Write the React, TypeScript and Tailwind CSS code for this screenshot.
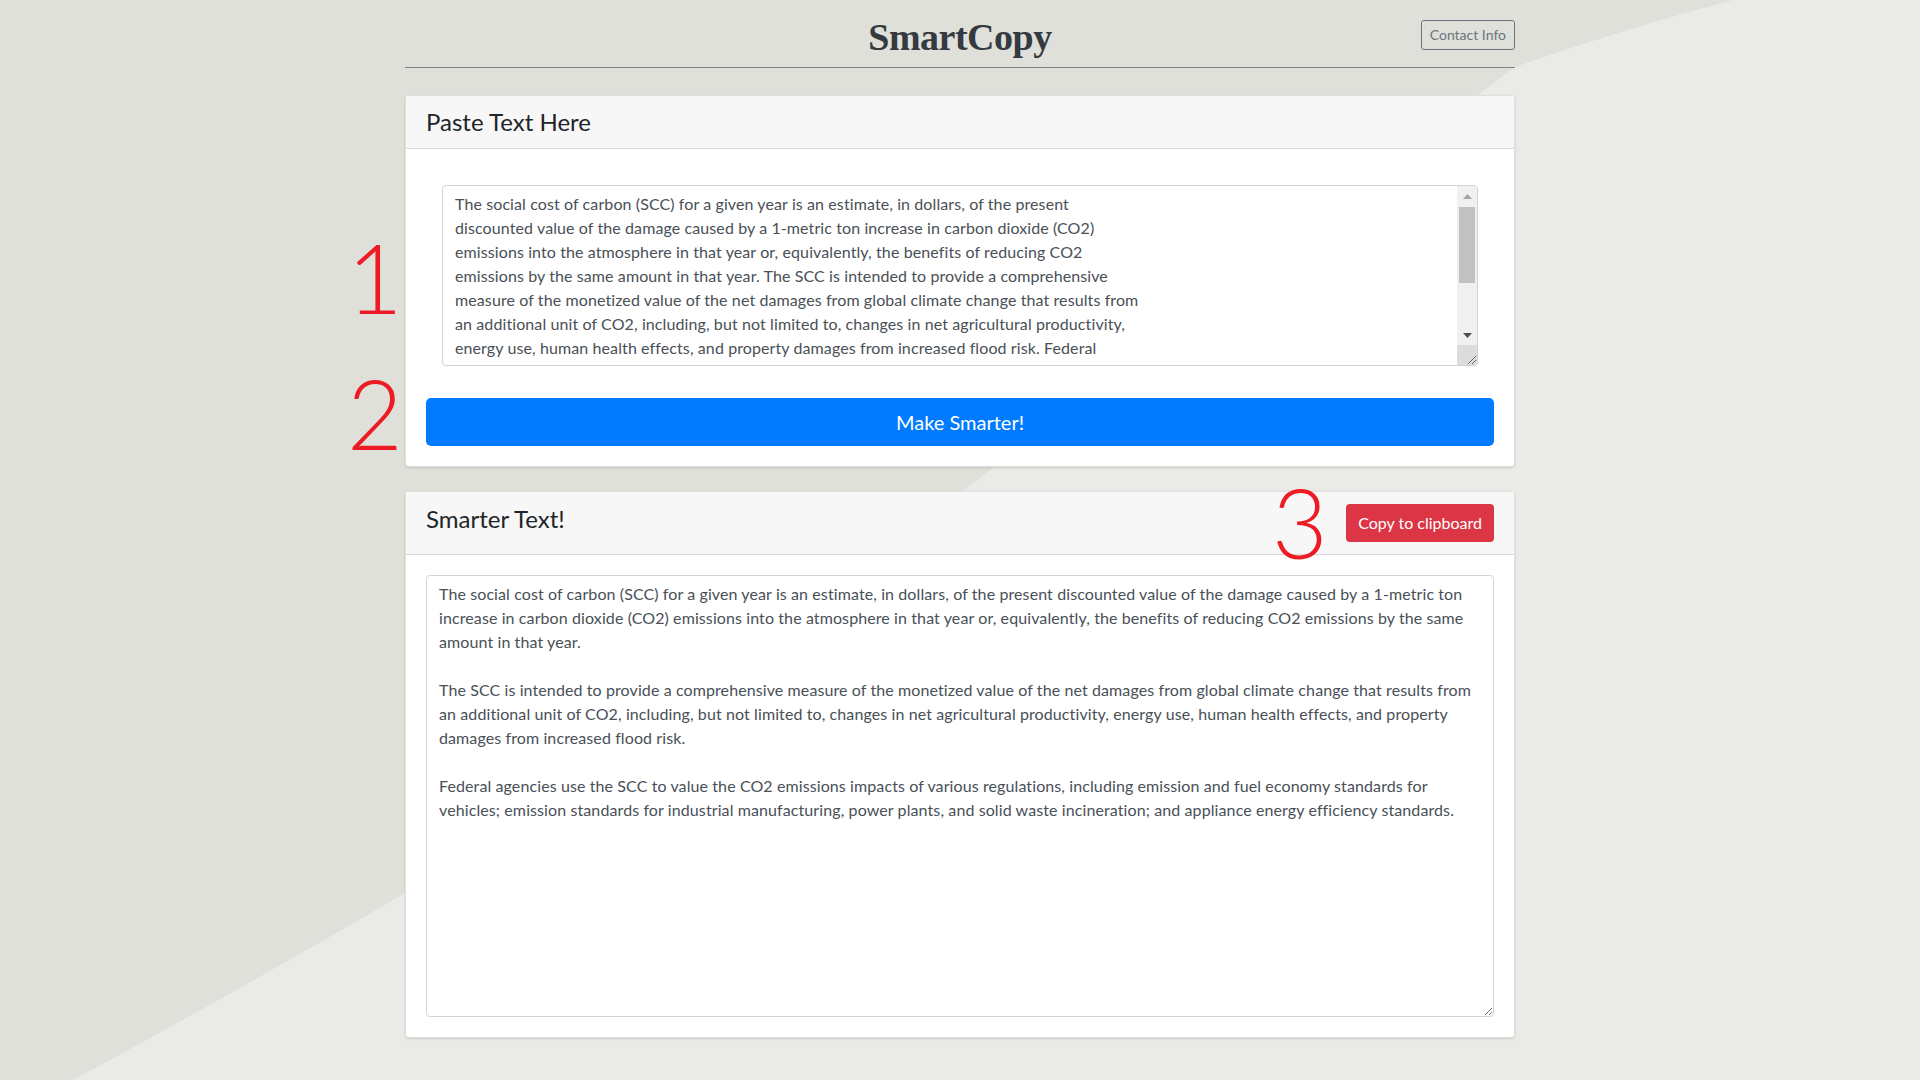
import React, { useState } from 'react';

const sourceText = `The social cost of carbon (SCC) for a given year is an estimate, in dollars, of the present
discounted value of the damage caused by a 1-metric ton increase in carbon dioxide (CO2)
emissions into the atmosphere in that year or, equivalently, the benefits of reducing CO2
emissions by the same amount in that year. The SCC is intended to provide a comprehensive
measure of the monetized value of the net damages from global climate change that results from
an additional unit of CO2, including, but not limited to, changes in net agricultural productivity,
energy use, human health effects, and property damages from increased flood risk. Federal
agencies use the SCC to value the CO2 emissions impacts of various regulations, including
emission and fuel economy standards for vehicles; emission standards for industrial
manufacturing, power plants, and solid waste incineration; and appliance energy efficiency
standards.`;

const smartText = `The social cost of carbon (SCC) for a given year is an estimate, in dollars, of the present discounted value of the damage caused by a 1-metric ton
increase in carbon dioxide (CO2) emissions into the atmosphere in that year or, equivalently, the benefits of reducing CO2 emissions by the same
amount in that year.

The SCC is intended to provide a comprehensive measure of the monetized value of the net damages from global climate change that results from
an additional unit of CO2, including, but not limited to, changes in net agricultural productivity, energy use, human health effects, and property
damages from increased flood risk.

Federal agencies use the SCC to value the CO2 emissions impacts of various regulations, including emission and fuel economy standards for
vehicles; emission standards for industrial manufacturing, power plants, and solid waste incineration; and appliance energy efficiency standards.`;

function Backdrop() {
  return (
    <svg
      className="absolute inset-0 w-full h-full"
      viewBox="0 0 1920 1080"
      preserveAspectRatio="none"
    >
      <rect width="1920" height="1080" fill="#dfe0da" />
      <path
        d="M73 1080 Q240 990 400 896 L980 478 Q1250 265 1515 67 Q1620 30 1733 0 L1920 0 L1920 1080 Z"
        fill="#eaebe7"
      />
    </svg>
  );
}

// the headless browser hides native scrollbars, so draw the windows one
function FakeScrollbar() {
  return (
    <div className="absolute right-px top-px bottom-px w-5 flex flex-col bg-[#f0f0f0] rounded-tr-[3px] rounded-br-[3px] overflow-hidden">
      <div className="h-5 flex items-center justify-center">
        <svg width="9" height="5" viewBox="0 0 9 5">
          <path d="M0 5 L4.5 0 L9 5 Z" fill="#a3a3a3" />
        </svg>
      </div>
      <div className="flex-1 px-[2px] pt-px">
        <div className="h-[76px] bg-[#c1c1c1]" />
      </div>
      <div className="h-5 flex items-center justify-center">
        <svg width="9" height="5" viewBox="0 0 9 5">
          <path d="M0 0 L9 0 L4.5 5 Z" fill="#505050" />
        </svg>
      </div>
      <div className="h-5 bg-[#dcdcdc] flex items-end justify-end">
        <svg width="12" height="12" viewBox="0 0 12 12">
          <path d="M11 3 L3 11 M11 7 L7 11" stroke="#6b6b6b" strokeWidth="1" />
        </svg>
      </div>
    </div>
  );
}

export default function App() {
  const [input, setInput] = useState(sourceText);
  const [output, setOutput] = useState(smartText);

  return (
    <div className="relative min-h-[1080px] overflow-hidden font-['Lato','Noto_Sans',sans-serif] text-[#212529]">
      <Backdrop />

      <div className="relative w-[1110px] mx-auto pb-10">
        <header className="grid grid-cols-[1fr_auto_1fr] pt-[13px] pb-[6px] border-b border-[#7d8286]">
          <div />
          <h1 className="font-['Liberation_Serif',serif] font-bold text-[38px] leading-[48px] text-[#343a40] tracking-[-0.5px]">
            SmartCopy
          </h1>
          <div className="flex justify-end items-start">
            <button className="mt-[7px] h-[30px] px-2 text-sm text-[#6c757d] border border-[#6c757d] rounded-[3px]">
              Contact Info
            </button>
          </div>
        </header>

        <section className="mt-[27px] bg-white border border-black/[.125] rounded shadow-sm">
          <div className="px-5 py-3 bg-[#f7f7f7] border-b border-black/[.125]">
            <h4 className="text-2xl leading-[28px]">Paste Text Here</h4>
          </div>
          <div className="p-5">
            <div className="p-4">
              <div className="relative">
                <textarea
                  value={input}
                  onChange={(e) => setInput(e.target.value)}
                  className="block w-full h-[181px] pl-3 pr-7 py-[6px] text-base leading-6 tracking-[0.1px] text-[#495057] border border-[#ced4da] rounded outline-none whitespace-pre overflow-hidden resize-none"
                />
                <FakeScrollbar />
              </div>
            </div>
            <button
              onClick={() => setOutput(input)}
              className="mt-4 w-full h-12 text-xl text-white bg-[#007bff] rounded-[5px]"
            >
              Make Smarter!
            </button>
          </div>
        </section>

        <section className="mt-[24px] bg-white border border-black/[.125] rounded shadow-sm">
          <div className="flex items-center justify-between px-5 py-3 bg-[#f7f7f7] border-b border-black/[.125]">
            <h4 className="mb-2 text-2xl leading-[28px]">Smarter Text!</h4>
            <button
              onClick={() => navigator.clipboard?.writeText(output)}
              className="h-[38px] px-3 text-base text-white bg-[#dc3545] rounded"
            >
              Copy to clipboard
            </button>
          </div>
          <div className="p-5">
            <textarea
              value={output}
              onChange={(e) => setOutput(e.target.value)}
              className="block w-full h-[442px] px-3 py-[6px] text-base leading-6 tracking-[0.1px] text-[#495057] border border-[#ced4da] rounded outline-none"
            />
          </div>
        </section>
      </div>

      {/* red step annotations */}
      <span className="absolute left-[347px] top-[229px] text-[96px] leading-none font-light text-[#ed1c24]">1</span>
      <span className="absolute left-[347px] top-[365px] text-[96px] leading-none font-light text-[#ed1c24]">2</span>
      <span className="absolute left-[1272px] top-[474px] text-[96px] leading-none font-light text-[#ed1c24]">3</span>
    </div>
  );
}
